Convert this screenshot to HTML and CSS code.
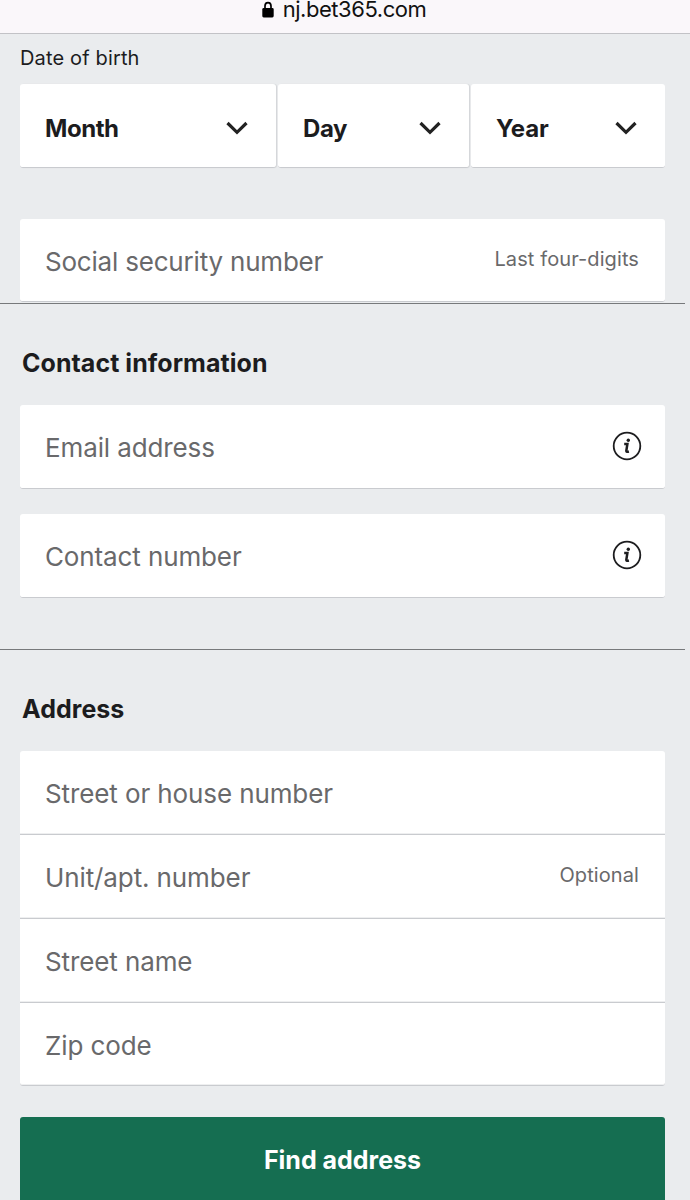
FILE: index.html
```html
<!DOCTYPE html>
<html lang="en">
<head>
    <meta charset="UTF-8">
    <meta name="viewport" content="width=device-width, initial-scale=1.0">
    <title>Join</title>
    <link rel="stylesheet" href="styles.css">
</head>
<body>
    <header class="address-bar">
        <svg class="lock" width="12" height="17" viewBox="0 0 12 17"><path d="M3 8V5a3 3.4 0 0 1 6 0v3" fill="none" stroke="#000" stroke-width="1.7"/><rect x="0.3" y="7" width="11.4" height="9.5" rx="1.4"/></svg>
        <span class="url">nj.bet365.com</span>
    </header>
    <form>
        <section class="personal">
            <div class="dob-label">Date of birth</div>
            <div class="dob">
                <div class="select"><span>Month</span><svg class="chevron" width="22" height="14" viewBox="0 0 22 14"><path d="M1.5 2L11 11.3L20.5 2"/></svg></div>
                <div class="select"><span>Day</span><svg class="chevron" width="22" height="14" viewBox="0 0 22 14"><path d="M1.5 2L11 11.3L20.5 2"/></svg></div>
                <div class="select"><span>Year</span><svg class="chevron" width="22" height="14" viewBox="0 0 22 14"><path d="M1.5 2L11 11.3L20.5 2"/></svg></div>
            </div>
            <div class="field"><span>Social security number</span><span class="hint">Last four-digits</span></div>
        </section>
        <section class="contact">
            <h2>Contact information</h2>
            <div class="field"><span>Email address</span><svg class="info" width="30" height="30" viewBox="0 0 30 30"><circle cx="15" cy="15" r="13.3"/><path d="M12.2 13h3.2l-1.1 6.9q-.1 1.3 2.6.6"/><circle class="dot" cx="16.3" cy="9.2" r="1.7"/></svg></div>
            <div class="field"><span>Contact number</span><svg class="info" width="30" height="30" viewBox="0 0 30 30"><circle cx="15" cy="15" r="13.3"/><path d="M12.2 13h3.2l-1.1 6.9q-.1 1.3 2.6.6"/><circle class="dot" cx="16.3" cy="9.2" r="1.7"/></svg></div>
        </section>
        <section class="address">
            <h2>Address</h2>
            <div class="group">
                <div class="field"><span>Street or house number</span></div>
                <div class="field"><span>Unit/apt. number</span><span class="hint">Optional</span></div>
                <div class="field"><span>Street name</span></div>
                <div class="field"><span>Zip code</span></div>
            </div>
            <button type="button">Find address</button>
        </section>
    </form>
</body>
</html>
```

FILE: styles.css
```css
* { box-sizing: border-box; }
body { margin: 0; height: 1200px; overflow: hidden; background: #eaecee; color: #1c1c1e; font-family: Inter, "Liberation Sans", sans-serif; }

.address-bar { height: 34px; background: #faf7fa; border-bottom: 1px solid #c2c2c6; display: flex; justify-content: center; gap: 9px; color: #111; font-size: 22px; line-height: 19px; letter-spacing: -0.45px; }
.lock { margin: 1px 0 0 -2px; }

section { width: 685px; padding: 0 20px; border-bottom: 1px solid #77797b; }
h2 { margin: 0; padding: 43px 0 0 2px; height: 101px; font-size: 25px; line-height: 32px; font-weight: 650; letter-spacing: 0.05px; }

.personal { height: 270px; }
.dob-label { padding-top: 10px; height: 50px; font-size: 20px; line-height: 28px; letter-spacing: 0.15px; }
.dob { display: grid; grid-template-columns: 256px 191px 194px; gap: 2px; margin-bottom: 51px; }
.select, .field { height: 83px; background: #fff; border-radius: 3px; border-bottom: 1px solid #c9cbcf; display: flex; align-items: center; justify-content: space-between; padding: 0 26px 0 25px; white-space: nowrap; }
.select { height: 84px; padding: 5px 28px 0 25px; font-size: 24px; font-weight: 650; letter-spacing: -0.45px; box-shadow: 1px 0 1px #d3d5d8; }
.select:last-child { letter-spacing: -0.1px; box-shadow: none; }
.chevron { fill: none; stroke: #222; stroke-width: 3.2; }

.field { color: #69696b; font-size: 26px; letter-spacing: -0.2px; padding-top: 3px; }
.hint { font-size: 20px; letter-spacing: 0.1px; padding-bottom: 6px; }

.contact { height: 346px; }
.contact .field { height: 84px; margin-bottom: 25px; padding-top: 2px; letter-spacing: -0.12px; }
.info { margin: 0 -3px 3px 0; fill: none; stroke: #1d1d1f; stroke-width: 1.8; }
.info path { stroke-width: 2.5; }
.info .dot { fill: #1d1d1f; stroke: none; }

.address { border: 0; }
.group .field { height: 84px; padding-top: 2px; border-radius: 0; letter-spacing: -0.11px; box-shadow: inset 0 -1px #eeeff0; }
.group .field:first-child { border-radius: 3px 3px 0 0; }
.group .field:last-child { height: 83px; border-radius: 0 0 3px 3px; }
.group .hint { padding-bottom: 5px; }
button { display: block; width: 100%; height: 85px; margin-top: 31px; padding: 0; background: #156e51; color: #fff; border: none; border-radius: 3px; font-family: inherit; font-size: 25px; font-weight: 650; }
```
